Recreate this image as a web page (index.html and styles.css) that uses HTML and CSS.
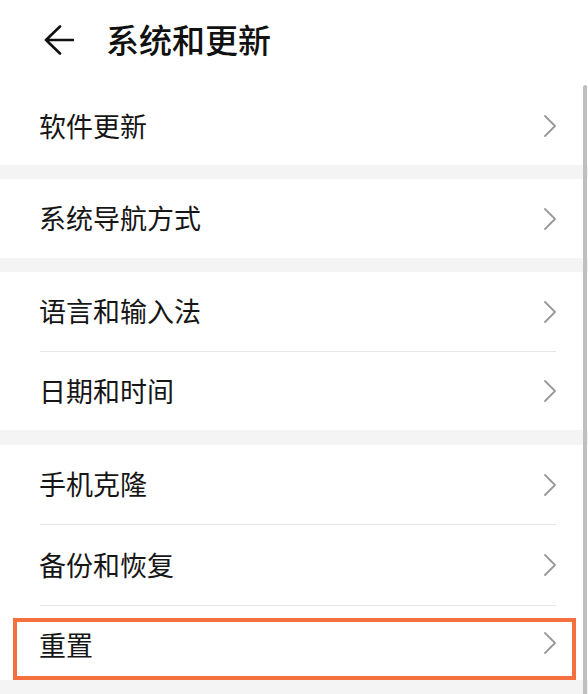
FILE: index.html
```html
<!DOCTYPE html>
<html lang="zh-CN">
<head>
<meta charset="utf-8">
<title>系统和更新</title>
<link rel="stylesheet" href="styles.css">
</head>
<body>
<div class="page">
  <div class="card card-top">
    <header class="header">
      <svg class="back" width="30" height="30" viewBox="0 0 30 30" aria-hidden="true">
        <path d="M29 15H2M16 1.5L2 15l14 13.5" fill="none" stroke="#111" stroke-width="2.6" stroke-linecap="round" stroke-linejoin="round"/>
      </svg>
      <h1 class="title">系统和更新</h1>
    </header>
    <div class="row row-first"><span class="label">软件更新</span><svg class="chev" width="12" height="22" viewBox="0 0 12 22"><path d="M1 1l10 10L1 21" fill="none" stroke="#999" stroke-width="1.8" stroke-linecap="round" stroke-linejoin="round"/></svg></div>
  </div>
  <div class="card">
    <div class="row"><span class="label">系统导航方式</span><svg class="chev" width="12" height="22" viewBox="0 0 12 22"><path d="M1 1l10 10L1 21" fill="none" stroke="#999" stroke-width="1.8" stroke-linecap="round" stroke-linejoin="round"/></svg></div>
  </div>
  <div class="card">
    <div class="row"><span class="label">语言和输入法</span><svg class="chev" width="12" height="22" viewBox="0 0 12 22"><path d="M1 1l10 10L1 21" fill="none" stroke="#999" stroke-width="1.8" stroke-linecap="round" stroke-linejoin="round"/></svg></div>
    <div class="row row-div"><span class="label">日期和时间</span><svg class="chev" width="12" height="22" viewBox="0 0 12 22"><path d="M1 1l10 10L1 21" fill="none" stroke="#999" stroke-width="1.8" stroke-linecap="round" stroke-linejoin="round"/></svg></div>
  </div>
  <div class="card card-last">
    <div class="row row-a"><span class="label">手机克隆</span><svg class="chev" width="12" height="22" viewBox="0 0 12 22"><path d="M1 1l10 10L1 21" fill="none" stroke="#999" stroke-width="1.8" stroke-linecap="round" stroke-linejoin="round"/></svg></div>
    <div class="row row-div row-b"><span class="label">备份和恢复</span><svg class="chev" width="12" height="22" viewBox="0 0 12 22"><path d="M1 1l10 10L1 21" fill="none" stroke="#999" stroke-width="1.8" stroke-linecap="round" stroke-linejoin="round"/></svg></div>
    <div class="row row-div row-c"><span class="label">重置</span><svg class="chev" width="12" height="22" viewBox="0 0 12 22"><path d="M1 1l10 10L1 21" fill="none" stroke="#999" stroke-width="1.8" stroke-linecap="round" stroke-linejoin="round"/></svg><div class="highlight"></div></div>
  </div>
  <div class="scrollbar"></div>
</div>
</body>
</html>
```
FILE: styles.css
```css
html, body {
  margin: 0;
  padding: 0;
}
body {
  background: #f4f4f4;
  font-family: "Noto Sans CJK SC", "Noto Sans", sans-serif;
  color: #111;
}
.page {
  position: relative;
  width: 588px;
  height: 694px;
  overflow: hidden;
  display: flex;
  flex-direction: column;
  gap: 14px;
}
.card {
  background: #fff;
  display: flex;
  flex-direction: column;
}
.card-last {
  margin-top: 1px;
}
.header {
  height: 87px;
  display: flex;
  align-items: center;
  padding-left: 44px;
  gap: 32px;
  box-sizing: border-box;
  padding-bottom: 8px;
}
.back {
  display: block;
  flex: none;
}
.title {
  margin: 0;
  font-size: 33px;
  font-weight: 500;
  line-height: 1;
  color: #111;
}
.row {
  position: relative;
  height: 79px;
  box-sizing: border-box;
  display: flex;
  align-items: center;
  justify-content: space-between;
  margin: 0 32px 0 40px;
}
.row-first {
  height: 78px;
}
.row-div {
  border-top: 1px solid #e6e6e6;
}
.row-b {
  height: 81px;
}
.row-c {
  height: 75px;
}
.row-c .label {
  padding-top: 4px;
}
.label {
  font-size: 27px;
  line-height: 1;
  color: #161616;
  margin-left: -1px;
  padding-bottom: 2px;
}
.chev {
  display: block;
  flex: none;
}
.highlight {
  position: absolute;
  left: -27px;
  right: -20px;
  top: 12px;
  bottom: 0;
  border: 4.5px solid #f5703f;
}
.scrollbar {
  position: absolute;
  right: 1px;
  top: 85px;
  bottom: 0;
  width: 4px;
  background: #bfbfbf;
  border-radius: 2px 2px 0 0;
}
```
